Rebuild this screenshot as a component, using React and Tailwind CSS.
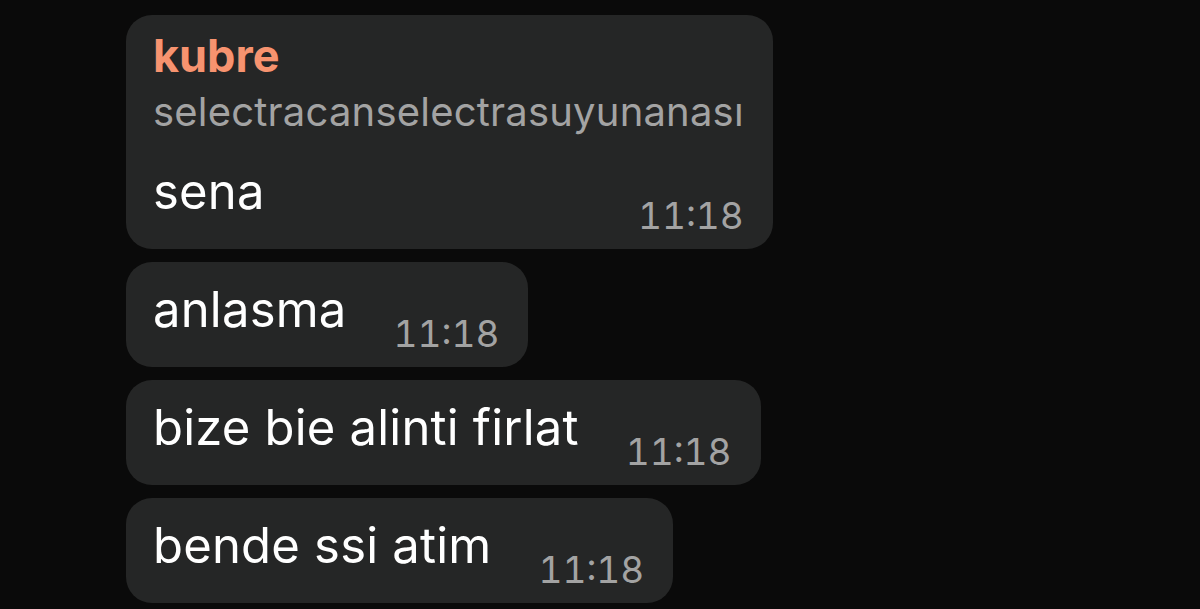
export default function App() {
  const font = { fontFamily: 'Inter, "Noto Sans", sans-serif' };
  const msgs = ["anlasma", "bize bie alinti firlat", "bende ssi atim"];
  return (
    <div className="w-[1200px] h-[609px] bg-[#0a0a0a] overflow-hidden" style={font}>
      <div className="flex flex-col items-start gap-[13px] pl-[126px] pt-[15px]">
        <div className="rounded-[26px] bg-[#252626] pl-[27px] pr-[29px] pt-[18px] pb-[15px] flex flex-col">
          <div className="text-[45px] leading-[45px] font-bold text-[#f7936f]">kubre</div>
          <div className="mt-[14px] text-[40px] leading-[40px] text-[#a3a3a3] tracking-[0.2px]">selectracanselectrasuyunanası</div>
          <div className="flex items-end justify-between gap-[47px] mt-[35px]">
            <span className="text-[49px] leading-[49px] text-white mb-[18px] tracking-[0.2px]">sena</span>
            <span className="text-[37px] leading-[37px] text-[#a3a3a3] tabular-nums">11:18</span>
          </div>
        </div>
        {msgs.map((m) => (
          <div key={m} className="rounded-[26px] bg-[#252626] pl-[27px] pr-[29px] pt-[23px] pb-[15px] flex items-end gap-[47px]">
            <span className="text-[49px] leading-[49px] text-white mb-[18px] tracking-[0.2px]">{m}</span>
            <span className="text-[37px] leading-[37px] text-[#a3a3a3] tabular-nums">11:18</span>
          </div>
        ))}
      </div>
    </div>
  );
}
